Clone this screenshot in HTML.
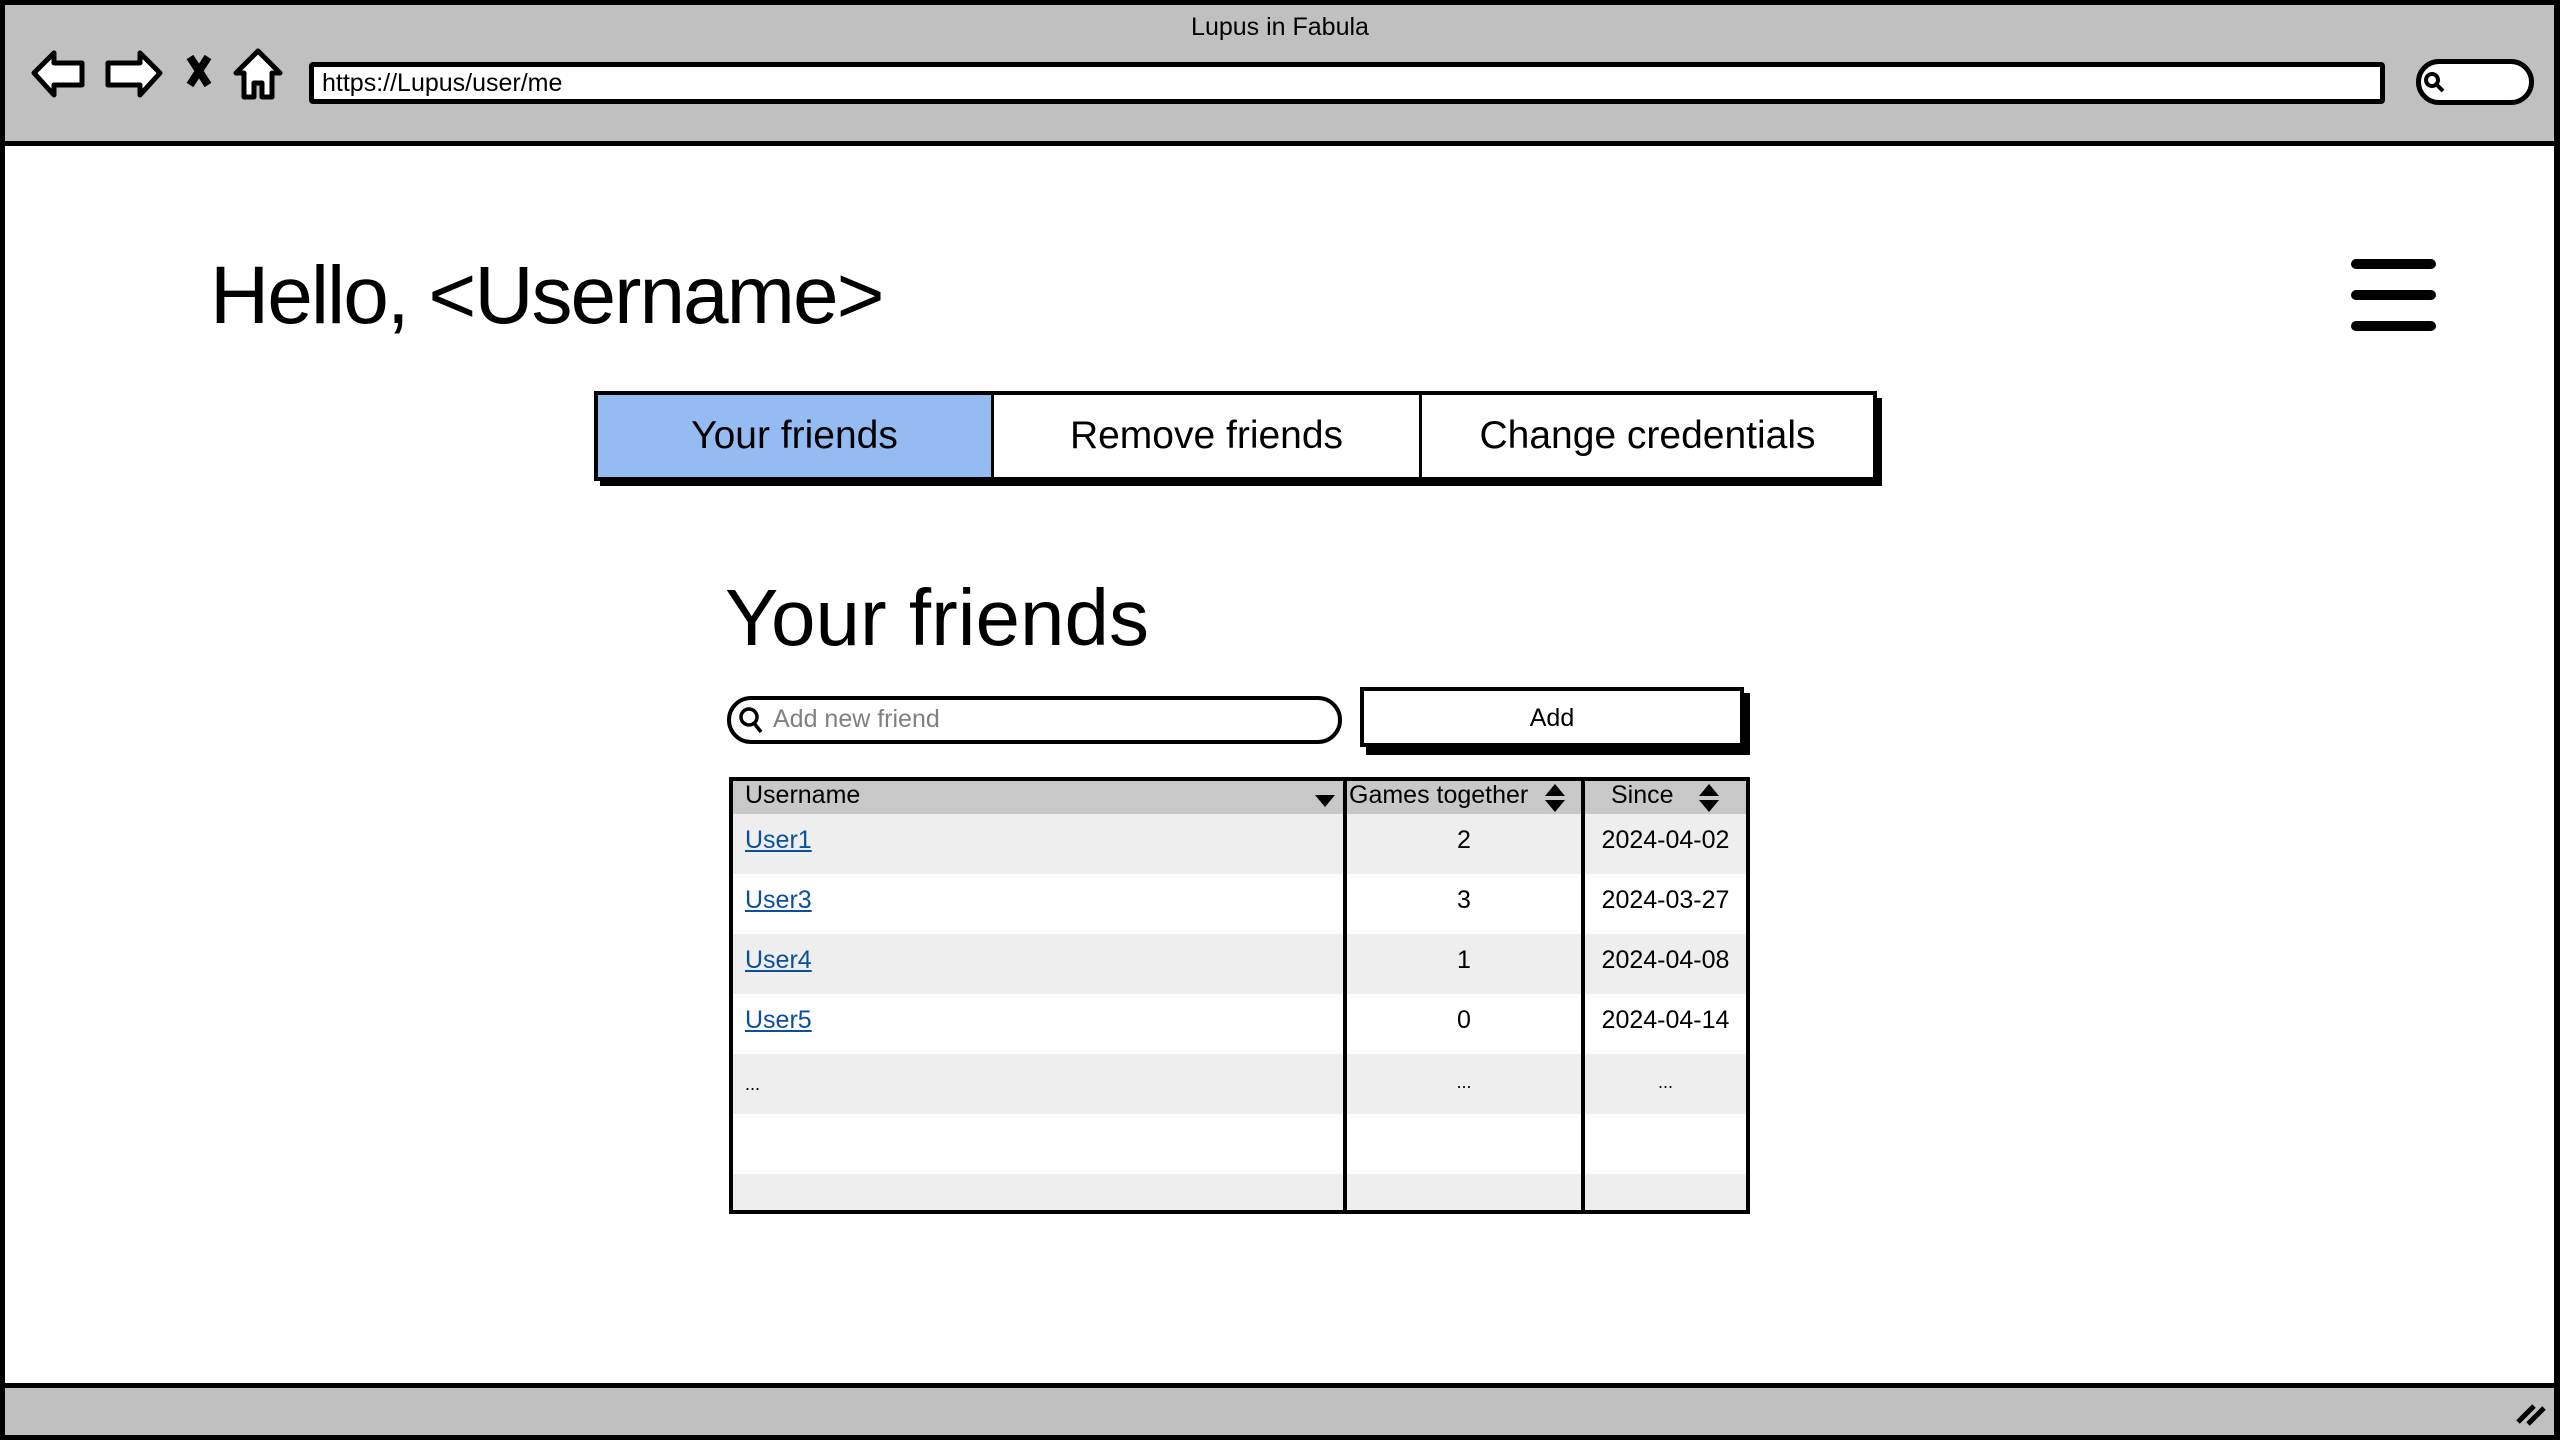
<!DOCTYPE html>
<html><head><meta charset="utf-8"><style>
*{margin:0;padding:0;box-sizing:border-box}
body{width:2560px;height:1440px;position:relative;background:#fff;font-family:"Liberation Sans",sans-serif;overflow:hidden;color:#000}
.a{position:absolute}
</style></head><body>
<div class="a" style="left:0;top:0;width:2560px;height:1440px;border:5px solid #000;border-right-width:6px"></div>
<div class="a" style="left:5px;top:5px;width:2549px;height:141px;background:#c0c0c0;border-bottom:5px solid #000"></div>
<div class="a" style="left:0;top:13px;width:2560px;text-align:center;font-size:25px">Lupus in Fabula</div>
<svg class="a" style="left:28px;top:45px" width="260" height="60" viewBox="0 0 260 60" fill="#fff" stroke="#000" stroke-width="5" stroke-linejoin="round">
<path d="M6 28 L26 8 L26 18 L54 18 L54 40 L26 40 L26 50 Z"/>
<path d="M132 28 L112 8 L112 18 L80 18 L80 40 L112 40 L112 50 Z"/>
<path d="M162 12 L180 40 M180 12 L162 40" stroke-width="8" fill="none"/>
<path d="M230 6 L252 28 L244 28 L244 52 L234 52 L234 38 L226 38 L226 52 L216 52 L216 28 L208 28 Z"/>
</svg>
<div class="a" style="left:309px;top:62px;width:2076px;height:42px;background:#fff;border:5px solid #000;border-radius:4px;font-size:25px;line-height:32px;padding-left:8px">https://Lupus/user/me</div>
<div class="a" style="left:2416px;top:59px;width:118px;height:46px;background:#fff;border:5px solid #000;border-radius:23px"></div>
<svg class="a" style="left:2422px;top:70px" width="26" height="26"><circle cx="10" cy="10" r="6" fill="none" stroke="#000" stroke-width="4"/><path d="M14 14 L21 21" stroke="#000" stroke-width="4"/></svg>
<div class="a" style="left:5px;top:1383px;width:2549px;height:52px;background:#c0c0c0;border-top:5px solid #000"></div>
<svg class="a" style="left:2512px;top:1398px" width="36" height="30"><path d="M6 24 L22 8 M16 26 L32 10" stroke="#000" stroke-width="5"/></svg>

<div class="a" style="left:210px;top:246px;font-size:82px;line-height:100px;letter-spacing:-2px">Hello, &lt;Username&gt;</div>
<div class="a" style="left:2351px;top:259px;width:85px;height:10px;background:#000;border-radius:5px"></div>
<div class="a" style="left:2351px;top:290px;width:85px;height:10px;background:#000;border-radius:5px"></div>
<div class="a" style="left:2351px;top:321px;width:85px;height:10px;background:#000;border-radius:5px"></div>

<div class="a" style="left:600px;top:398px;width:1282px;height:88px;background:#000"></div>
<div class="a" style="left:594px;top:391px;width:1283px;height:90px;border:4px solid #000;background:#fff;display:flex;font-size:39px">
<div style="width:396px;background:#94bbf2;border-right:3px solid #000;display:flex;align-items:center;justify-content:center">Your friends</div>
<div style="width:428px;border-right:3px solid #000;display:flex;align-items:center;justify-content:center">Remove friends</div>
<div style="flex:1;display:flex;align-items:center;justify-content:center">Change credentials</div>
</div>

<div class="a" style="left:725px;top:568px;font-size:80px;line-height:100px">Your friends</div>

<div class="a" style="left:727px;top:696px;width:615px;height:48px;border:4px solid #000;border-radius:24px;font-size:25px;color:#808080;line-height:38px;padding-left:42px">Add new friend</div>
<svg class="a" style="left:737px;top:705px" width="30" height="32"><circle cx="12" cy="12" r="8" fill="none" stroke="#000" stroke-width="3.5"/><path d="M17 18 L24 27" stroke="#000" stroke-width="3.5"/></svg>
<div class="a" style="left:1366px;top:693px;width:384px;height:62px;background:#000"></div>
<div class="a" style="left:1360px;top:687px;width:384px;height:60px;background:#fff;border:4px solid #000;text-align:center;font-size:25px;line-height:54px">Add</div>

<div class="a" style="left:729px;top:777px;width:1021px;height:437px;border:4px solid #000;overflow:hidden;font-size:25px">
 <div class="a" style="left:0;top:0;width:1013px;height:33px;background:#c8c8c8"></div>
 <div class="a" style="left:0;top:33px;width:1013px;height:60px;background:#eee"></div>
 <div class="a" style="left:0;top:153px;width:1013px;height:60px;background:#eee"></div>
 <div class="a" style="left:0;top:273px;width:1013px;height:60px;background:#eee"></div>
 <div class="a" style="left:0;top:393px;width:1013px;height:40px;background:#eee"></div>
 <div class="a" style="left:610px;top:0;width:4px;height:437px;background:#000"></div>
 <div class="a" style="left:848px;top:0;width:4px;height:437px;background:#000"></div>
 <div class="a" style="left:12px;top:-2px;line-height:33px">Username</div>
 <svg class="a" style="left:582px;top:14px" width="20" height="14"><path d="M0 0 L20 0 L10 12Z"/></svg>
 <div class="a" style="left:616px;top:-2px;line-height:33px">Games together</div>
 <svg class="a" style="left:812px;top:3px" width="20" height="28"><path d="M0 12 L20 12 L10 0Z M0 16 L20 16 L10 28Z"/></svg>
 <div class="a" style="left:878px;top:-2px;line-height:33px">Since</div>
 <svg class="a" style="left:966px;top:3px" width="20" height="28"><path d="M0 12 L20 12 L10 0Z M0 16 L20 16 L10 28Z"/></svg>
 <div class="a" style="left:12px;top:29px;line-height:60px;color:#0b4f9c;text-decoration:underline">User1</div>
 <div class="a" style="left:12px;top:89px;line-height:60px;color:#0b4f9c;text-decoration:underline">User3</div>
 <div class="a" style="left:12px;top:149px;line-height:60px;color:#0b4f9c;text-decoration:underline">User4</div>
 <div class="a" style="left:12px;top:209px;line-height:60px;color:#0b4f9c;text-decoration:underline">User5</div>
 <div class="a" style="left:12px;top:273px;line-height:60px;font-size:18px">...</div>
 <div class="a" style="left:614px;top:29px;width:234px;text-align:center;line-height:60px">2<br>3<br>1<br>0<br><span style="font-size:18px">...</span></div>
 <div class="a" style="left:852px;top:29px;width:161px;text-align:center;line-height:60px">2024-04-02<br>2024-03-27<br>2024-04-08<br>2024-04-14<br><span style="font-size:18px">...</span></div>
</div>
</body></html>
